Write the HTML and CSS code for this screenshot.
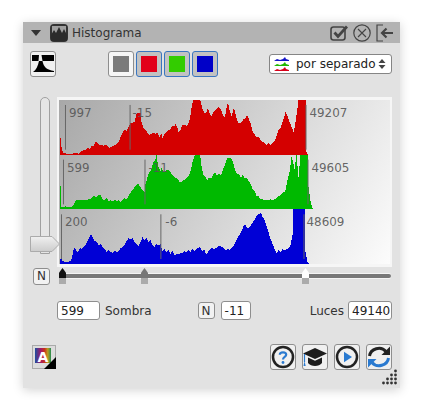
FILE: index.html
```html
<!DOCTYPE html>
<html lang="es">
<head>
  <meta charset="UTF-8">
  <meta name="viewport" content="width=device-width, initial-scale=1.0">
  <title>Histograma</title>
  <link rel="stylesheet" href="styles.css">
</head>
<body>
  <div class="panel">
    <div class="titlebar">
      <span class="arrow"></span>
      <svg class="title-icon" viewBox="0 0 18 18">
        <rect width="18" height="18" rx="4" fill="#333"/>
        <path d="M2 2h14v9H2z" fill="#a0a0a0"/>
        <path d="M1 17V11L4 6 6 9 9 3 12 9 14 5 17 11V17Z" fill="#2b2b2b"/>
      </svg>
      <span class="title">Histograma</span>
      <span class="title-tools">
        <svg class="tool" viewBox="0 0 18 18" fill="none" stroke="#444">
          <rect x="1" y="3" width="14" height="13" rx="2.5" stroke-width="1.6"/>
          <path d="M4.5 8.5 8 12.5 17 2.5" stroke-width="2.8"/>
        </svg>
        <svg class="tool" viewBox="0 0 18 18" fill="none" stroke="#444">
          <circle cx="9" cy="9" r="8.2" stroke-width="1.2"/>
          <path d="M5 5 13 13M13 5 5 13" stroke-width="1.1"/>
        </svg>
        <svg class="tool" viewBox="0 0 18 18" fill="none" stroke="#444">
          <path d="M7 1H1V17H7" stroke-width="1.2"/>
          <path d="M17 9H6M10.5 4.5 6 9 10.5 13.5" stroke-width="2.2"/>
        </svg>
      </span>
    </div>

    <div class="toolbar">
      <button class="btn">
        <svg class="icon" viewBox="0 0 24 24">
          <path d="M1 3H8L7.500 9H1ZM10.500 3H23V9H11.500Z" fill="#000"/>
          <path d="M2 20C5 18 7 14 8 9H11.500C12.500 15 16 18 23 19V20Z" fill="#000"/>
        </svg>
      </button>
      <div class="swatches">
        <button class="btn swatch off"><span class="chip chip-gray"></span></button>
        <button class="btn swatch"><span class="chip chip-red"></span></button>
        <button class="btn swatch"><span class="chip chip-green"></span></button>
        <button class="btn swatch"><span class="chip chip-blue"></span></button>
      </div>
      <div class="select">
        <svg class="select-icon" viewBox="0 0 16 16">
          <path d="M0 5 3 3 6 4 9 3 11 1 12 3 15 4V5Z" fill="#1515c8"/>
          <path d="M0 10 3 8 6 9 9 8 11 6 12 8 15 9V10Z" fill="#22b800"/>
          <path d="M0 15 3 13 6 14 9 13 11 11 12 13 15 14V15Z" fill="#d8001a"/>
        </svg>
        <span>por separado</span>
        <svg class="updown" viewBox="0 0 8 12"><path d="M4 1 7.500 5H.5ZM4 11 .5 7H7.500Z" fill="#444"/></svg>
      </div>
    </div>

    <div class="main">
      <div class="vslider">
        <div class="vtrack"></div>
        <svg class="vthumb" viewBox="0 0 30 16">
          <defs>
            <linearGradient id="thumbfill" x1="0" y1="0" x2="0" y2="1">
              <stop offset="0" stop-color="#f0f0f0"/>
              <stop offset="1" stop-color="#cccccc"/>
            </linearGradient>
          </defs>
          <path d="M.5 .5H22L29.500 8 22 15.500H.5Z" fill="url(#thumbfill)" stroke="#ababab"/>
        </svg>
      </div>
      <div class="plot">
        <svg class="hist" viewBox="59 100 331 165">
          <g shape-rendering="crispEdges">
            <polygon fill="#d40000" points="59,155 59,131 60,145 61,150 62,153 66,154 72,154 75,153 78,154 80,152 82,151 85,150 87,148 89,149 91,146 93,146 95,142 97,144 99,146 101,145 103,146 105,145 107,147 109,148 111,147 113,146 115,145 118,142 120,137 122,133 124,130 126,131 128,127 130,123 132,123 134,122 136,114 138,113 140,113 141,122 143,128 145,130 147,133 149,135 151,134 153,133 155,134 157,133 159,137 161,134 162,138 164,134 166,132 168,130 170,130 172,126 174,127 175,124 177,127 178,132 180,131 182,125 184,125 186,126 188,124 190,118 191,110 193,100 200,100 202,108 204,113 206,113 208,108 209,112 211,117 213,113 215,110 217,109 219,107 221,110 223,116 225,118 226,110 228,102 230,112 232,117 233,110 234,108 236,116 238,123 240,123 242,122 244,119 246,118 247,115 249,119 251,124 253,132 255,135 257,138 259,137 261,141 263,142 265,144 267,145 269,143 271,145 273,143 275,141 277,136 279,130 281,128 283,122 285,116 286,112 288,116 290,122 292,127 294,132 295,128 297,115 299,100 306,100 306,150 308,154 309,155"/>
            <polygon fill="#00b900" points="59,210 59,165 60,207 62,208 64,207 68,208 72,207 74,203 76,200 78,201 80,200 83,201 86,201 88,199 90,200 92,197 94,197 96,198 98,195 100,196 102,200 104,201 106,198 108,202 110,201 112,202 114,200 116,202 118,201 120,203 122,201 124,199 126,200 128,196 130,193 132,191 134,187 136,185 138,185 140,188 142,191 144,193 145,185 147,178 149,172 151,170 153,162 155,160 156,155 157,162 158,167 160,172 161,168 163,173 165,172 167,170 169,171 171,174 173,176 175,178 177,179 179,182 181,183 183,181 185,180 187,178 189,175 191,170 192,163 194,157 195,155 200,155 201,164 203,175 205,177 207,181 209,178 211,179 213,175 215,173 217,176 219,174 221,176 223,170 225,165 227,159 229,158 231,158 233,162 235,170 237,175 239,174 241,178 243,175 245,179 247,178 249,182 251,185 253,190 255,192 257,197 259,197 261,200 263,200 265,201 267,200 269,201 271,200 273,201 275,200 277,198 279,197 281,196 283,193 285,193 286,190 288,180 290,172 292,157 294,165 295,170 297,155 299,178 301,155 309,155 309,187 311,202 313,209 314,210"/>
            <polygon fill="#0000d6" points="59,265 60,255 61,262 66,263 70,262 72,255 73,248 75,251 77,253 79,249 81,250 83,248 85,245 87,241 89,237 90,235 92,238 94,242 96,243 98,246 100,245 102,248 104,250 106,253 108,251 110,253 112,254 114,252 116,253 118,252 120,249 122,248 124,246 126,242 128,239 130,240 132,239 134,243 136,245 138,247 140,243 142,238 144,241 146,239 148,243 150,241 152,246 154,248 156,245 158,246 160,245 162,252 164,250 166,253 168,251 170,255 172,252 174,256 178,255 182,254 184,252 186,253 188,251 190,253 192,250 194,252 196,250 198,249 200,248 202,252 204,250 206,255 208,253 210,250 212,249 214,250 216,249 218,247 220,247 222,248 224,249 226,251 228,250 230,251 232,248 234,246 236,242 238,238 240,235 242,231 244,226 245,225 247,228 249,229 251,226 253,223 255,220 257,216 259,215 261,213 263,218 265,221 267,227 269,234 271,240 273,245 275,250 277,254 279,251 281,253 283,250 285,251 287,250 289,249 291,246 293,235 293,210 305,210 305,247 307,258 308,263 310,265"/>
          </g>
          <g class="marks">
            <path d="M64.500 105V150M129.500 105V150M306.500 105V150"/>
            <path d="M62.500 160V205M144.500 160V205M308.500 160V205"/>
            <path d="M60.500 215V260M160.500 215V260M304.500 215V260"/>
          </g>
          <text class="num" x="68" y="117">997</text>
          <text class="num" x="132" y="117">-15</text>
          <text class="num" x="310" y="117">49207</text>
          <text class="num" x="66" y="172">599</text>
          <text class="num" x="148" y="172">-11</text>
          <text class="num" x="312" y="172">49605</text>
          <text class="num" x="64" y="227">200</text>
          <text class="num" x="165" y="227">-6</text>
          <text class="num" x="307" y="227">48609</text>
        </svg>
      </div>
    </div>

    <div class="range-row">
      <button class="btn small">N</button>
      <div class="range">
        <span class="handle handle-black"></span>
        <span class="handle handle-gray"></span>
        <span class="handle handle-white"></span>
      </div>
    </div>

    <div class="params">
      <div class="field field-black">599</div>
      <span class="label">Sombra</span>
      <button class="btn small mid-n">N</button>
      <div class="field field-gamma">-11</div>
      <span class="label luces">Luces</span>
      <div class="field field-white">49140</div>
    </div>

    <div class="bottom">
      <button class="auto">
        <svg viewBox="0 0 24 24">
          <defs>
            <linearGradient id="rainbow">
              <stop offset="0" stop-color="#1a4fa0"/>
              <stop offset=".35" stop-color="#a01a6a"/>
              <stop offset=".6" stop-color="#c8301a"/>
              <stop offset=".8" stop-color="#b8a020"/>
              <stop offset="1" stop-color="#208a50"/>
            </linearGradient>
          </defs>
          <rect x="3" y="3" width="16" height="15" fill="url(#rainbow)"/>
          <text class="auto-a" x="11" y="16.500">A</text>
          <path d="M24 12V24H12Z" fill="#000"/>
        </svg>
      </button>
      <div class="actions">
        <button class="btn">
          <svg class="icon" viewBox="0 0 24 24" fill="none">
            <circle cx="12" cy="12" r="10" stroke="#222" stroke-width="2.500"/>
            <path d="M8.800 9.800C8.800 6.500 15.200 6.500 15.200 9.800 15.200 12 12 12 12 14.500" stroke="#2a7ad0" stroke-width="2.200"/>
            <circle cx="12" cy="17.500" r="1.400" fill="#2a7ad0"/>
          </svg>
        </button>
        <button class="btn">
          <svg class="icon" viewBox="0 0 24 24">
            <path d="M12 3 24 8.500 12 14 0 8.500Z" fill="#1c1c1c"/>
            <path d="M5 12.500 12 15.800 19 12.500V18C16 22 8 22 5 18Z" fill="#1c1c1c"/>
            <path d="M1.500 9V17" stroke="#2a7ad0" stroke-width="1.200"/>
            <path d="M.5 21 1.500 16 2.700 21Z" fill="#2a7ad0"/>
          </svg>
        </button>
        <button class="btn">
          <svg class="icon" viewBox="0 0 24 24" fill="none">
            <circle cx="12" cy="12" r="10" stroke="#222" stroke-width="2.500"/>
            <path d="M9 6.800 17 12 9 17.200Z" fill="#2a7ad0"/>
          </svg>
        </button>
        <button class="btn">
          <svg class="icon" viewBox="0 0 24 24" fill="none">
            <path d="M2.500 11C3.500 3.500 14 .5 19 6.500" stroke="#222" stroke-width="3"/>
            <path d="M23 1.500V10H14.500Z" fill="#222"/>
            <path d="M21.500 13C20.500 20.500 10 23.500 5 17.500" stroke="#2a7ad0" stroke-width="3"/>
            <path d="M1 22.500V14H9.500Z" fill="#2a7ad0"/>
          </svg>
        </button>
      </div>
    </div>

    <svg class="grip" viewBox="0 0 18 17" fill="#333">
      <circle cx="15.500" cy="2" r="1.400"/>
      <circle cx="11.500" cy="6" r="1.400"/><circle cx="15.500" cy="6" r="1.400"/>
      <circle cx="7.500" cy="10" r="1.400"/><circle cx="11.500" cy="10" r="1.400"/><circle cx="15.500" cy="10" r="1.400"/>
      <circle cx="3.500" cy="14" r="1.400"/><circle cx="7.500" cy="14" r="1.400"/><circle cx="11.500" cy="14" r="1.400"/><circle cx="15.500" cy="14" r="1.400"/>
    </svg>
  </div>
</body>
</html>
```

FILE: styles.css
```css
* {
  box-sizing: border-box;
}
html, body {
  height: 100%;
}
body {
  margin: 0;
  padding: 22px 22px 0 23px;
  background-color: #fff;
  color: #333;
  font-family: "DejaVu Sans", sans-serif;
  font-size: 12px;
  overflow: hidden;
}
.panel {
  position: relative;
  width: 377px;
  height: 366px;
  background-color: #e2e2e2;
  box-shadow: 0 2px 10px rgba(0, 0, 0, 0.18);
}
.titlebar {
  display: flex;
  align-items: center;
  height: 21px;
  padding-left: 8px;
  background-color: #b3b3b3;
}
.arrow {
  width: 0;
  height: 0;
  border-left: 5px solid transparent;
  border-right: 5px solid transparent;
  border-top: 6px solid #333;
}
.title-icon {
  width: 18px;
  height: 18px;
  margin-left: 9px;
}
.title {
  margin-left: 4px;
  color: #333;
}
.title-tools {
  display: flex;
  gap: 5px;
  margin-left: auto;
  margin-right: 6px;
}
.tool {
  width: 18px;
  height: 18px;
}
.toolbar {
  display: flex;
  align-items: center;
  height: 26px;
  margin-top: 8px;
  padding-left: 7px;
}
button {
  font: inherit;
  color: inherit;
  padding: 0;
}
.btn {
  display: flex;
  align-items: center;
  justify-content: center;
  width: 26px;
  height: 26px;
  background-color: #f0f0f0;
  border: 1px solid #8e8e8e;
  border-radius: 3px;
}
.icon {
  width: 24px;
  height: 24px;
}
.swatches {
  display: flex;
  gap: 2px;
  margin-left: 52px;
}
.swatch {
  background-color: #c2c2c2;
  border-color: #3a76c0;
}
.swatch.off {
  background-color: #f6f6f6;
  border-color: #8e8e8e;
}
.chip {
  width: 16px;
  height: 16px;
}
.chip-gray { background-color: #7b7b7b; }
.chip-red { background-color: #e2001a; }
.chip-green { background-color: #33cc00; }
.chip-blue { background-color: #0000c8; }
.select {
  display: flex;
  align-items: center;
  width: 123px;
  height: 20px;
  margin-left: 51px;
  padding: 0 5px 0 4px;
  background-color: #fff;
  border: 1px solid #858585;
  border-radius: 3px;
  color: #222;
}
.select-icon {
  width: 16px;
  height: 16px;
  flex: none;
}
.select span {
  margin-left: 6px;
  white-space: nowrap;
}
.updown {
  width: 8px;
  height: 12px;
  margin-left: auto;
}
.main {
  display: flex;
  margin-top: 20px;
  padding-left: 7px;
}
.vslider {
  position: relative;
  z-index: 1;
  flex: none;
  width: 27px;
  height: 170px;
}
.vtrack {
  width: 10px;
  height: 157px;
  margin-left: 10px;
  background-color: #e6e6e6;
  border: 1px solid #a0a0a0;
  border-radius: 5px 5px 0 0;
}
.vthumb {
  position: absolute;
  left: 0;
  top: 139px;
  width: 30px;
  height: 16px;
}
.plot {
  width: 335px;
  height: 170px;
  border: solid #f6f6f6;
  border-width: 3px 2px 3px 2px;
  background: linear-gradient(119deg, #a8a8a8, #fcfcfc);
}
.hist {
  display: block;
  width: 331px;
  height: 164px;
}
.marks path {
  fill: none;
  stroke: #666;
  stroke-width: 1;
}
.num {
  fill: #555;
  fill-opacity: 0.9;
  font-size: 12px;
}
.range-row {
  display: flex;
  align-items: center;
  height: 18px;
  padding-left: 10px;
}
.small {
  width: 17px;
  height: 17px;
  font-size: 12px;
  background-color: #f2f2f2;
  flex: none;
}
.range {
  position: relative;
  width: 331px;
  height: 4px;
  margin-left: 10px;
  background-color: #787878;
  border-radius: 2px;
  box-shadow: 0 1px 0 #f4f4f4, 0 -1px 0 #f4f4f4;
}
.handle {
  position: absolute;
  top: -6px;
  width: 7px;
  height: 16px;
  clip-path: polygon(50% 0, 100% 30%, 100% 100%, 0 100%, 0 30%);
  background: linear-gradient(#777 0 10px, #ababab 10px);
}
.handle-black {
  left: -1px;
  background: linear-gradient(#111 0 10px, #ababab 10px);
}
.handle-gray {
  left: 81px;
}
.handle-white {
  left: 242px;
  background: linear-gradient(#fff 0 10px, #ababab 10px);
}
.params {
  display: flex;
  align-items: center;
  height: 19px;
  margin-top: 16px;
  padding: 0 8px 0 34px;
}
.field {
  height: 19px;
  padding: 0 3px;
  line-height: 18px;
  background-color: #fff;
  border: 1px solid #8e8e8e;
  border-radius: 3px;
  color: #222;
}
.field-black {
  width: 43px;
}
.field-gamma {
  width: 30px;
  margin-left: 6px;
}
.field-white {
  width: 44px;
  margin-left: 4px;
}
.label {
  margin-left: 5px;
}
.mid-n {
  margin-left: 46px;
}
.luces {
  margin-left: auto;
}
.bottom {
  display: flex;
  align-items: center;
  height: 26px;
  margin-top: 24px;
  padding: 0 8px 0 9px;
}
.auto {
  width: 24px;
  height: 24px;
  border: none;
  background-color: #dcdcdc;
  box-shadow: inset 0 0 0 1px #aaa;
}
.auto svg {
  display: block;
  width: 24px;
  height: 24px;
}
.auto-a {
  fill: #fff;
  font-size: 14px;
  font-weight: bold;
  text-anchor: middle;
}
.actions {
  display: flex;
  gap: 6px;
  margin-left: auto;
}
.grip {
  position: absolute;
  right: 2px;
  bottom: 2px;
  width: 18px;
  height: 17px;
}
```
